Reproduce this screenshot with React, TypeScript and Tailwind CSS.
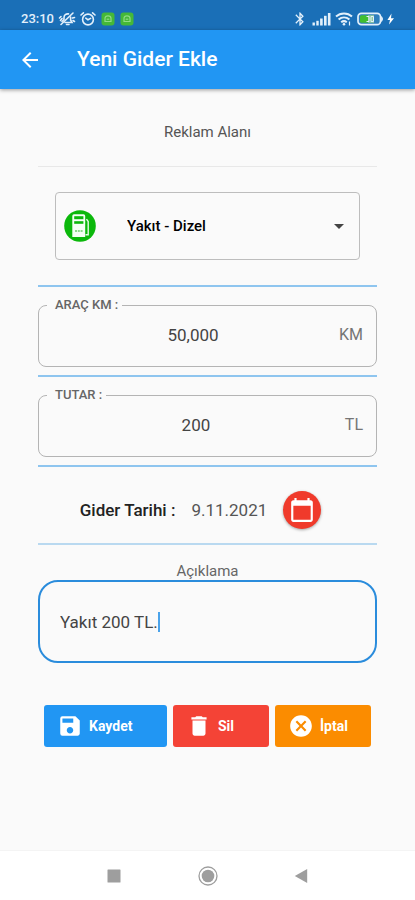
import { useState } from 'react';
import type { ReactNode } from 'react';
import {
  MdArrowBack,
  MdArrowDropDown,
  MdBluetooth,
  MdCalendarToday,
  MdCancel,
  MdDelete,
  MdSave,
} from 'react-icons/md';

function MutedBellIcon() {
  return (
    <svg width="18" height="16" viewBox="0 0 18 16" fill="none" stroke="currentColor" strokeWidth="1.6" strokeLinecap="round">
      <path d="M4 10.5 L6 8.5 V6.5 C6 4 8 2.6 10.5 2.9 M12.6 6 V9 L14 11.5 H7" />
      <path d="M8.5 13.5 H11 M3 13.5 L15 2 M1.5 7 L3 5.5 M2.5 9.5 L4 7.5 M14.5 7 L16.5 6.5 M15 9.5 L16.5 10.5" />
    </svg>
  );
}

function AlarmIcon() {
  return (
    <svg width="16" height="16" viewBox="0 0 16 16" fill="none" stroke="currentColor" strokeWidth="1.6" strokeLinecap="round">
      <circle cx="8" cy="8.5" r="5.4" />
      <path d="M8 8.8 L5.8 7.2 M8 8.8 L10.6 7.4 M1 4 L3.4 1.8 M15 4 L12.6 1.8" />
    </svg>
  );
}

function AppBadgeIcon() {
  return (
    <svg width="14" height="14" viewBox="0 0 14 14">
      <rect x="0.5" y="0.5" width="13" height="13" rx="3" fill="#45b838" />
      <path d="M4 9.5 V6.5 C4 4.8 5.2 3.8 7 3.8 S10 4.8 10 6.5 V9.5 Z" fill="none" stroke="#8fdc84" strokeWidth="1.2" />
      <path d="M5.7 7.2 H8.3" stroke="#8fdc84" strokeWidth="1.2" />
    </svg>
  );
}

function SignalIcon() {
  return (
    <svg width="19" height="14" viewBox="0 0 19 14" fill="currentColor">
      <rect x="0.5" y="10.5" width="2.4" height="3" />
      <rect x="4.3" y="8.8" width="2.4" height="4.7" />
      <rect x="8.1" y="6.5" width="2.6" height="7" />
      <rect x="12" y="3.8" width="2.6" height="9.7" />
      <rect x="15.9" y="1" width="2.6" height="12.5" />
    </svg>
  );
}

function WifiIcon() {
  return (
    <svg width="18" height="14" viewBox="0 0 18 14" fill="none" stroke="currentColor" strokeWidth="2">
      <path d="M1 4.6 C5.5 0.4 12.5 0.4 17 4.6 M3.6 7.6 C6.8 4.7 11.2 4.7 14.4 7.6 M6.2 10.3 C7.9 8.9 10.1 8.9 11.8 10.3" />
      <circle cx="9" cy="12.2" r="1.3" fill="currentColor" stroke="none" />
      <path d="M14.5 9.5 V13.5" strokeWidth="1.2" />
    </svg>
  );
}

function BatteryIcon() {
  return (
    <svg width="38" height="14" viewBox="0 0 38 14">
      <rect x="1" y="1.4" width="22.5" height="11.2" rx="3.4" fill="#2f7fbd" stroke="#e3f0fb" strokeWidth="1.7" />
      <path d="M3 4.8 Q3 3.2 4.6 3.2 H11 V10.8 H4.6 Q3 10.8 3 9.2 Z" fill="#3fbf2f" />
      <rect x="11" y="3.2" width="6" height="7.6" fill="#8fcb9c" />
      <path d="M9.5 4.5 H12 V9.5 H9.5 M14 9.5 V4.5 H16.5 V9.5 Z" fill="none" stroke="#e3f0fb" strokeWidth="1" />
      <path d="M24.6 4.6 Q26.4 7 24.6 9.4 Z" fill="#e3f0fb" stroke="#e3f0fb" />
      <path d="M34.5 1.6 L30.4 7.9 H33 L32 12.6 L37 6.3 H34 Z" fill="#fff" />
    </svg>
  );
}

function FuelIcon() {
  return (
    <svg width="32" height="32" viewBox="0 0 32 32" className="shrink-0">
      <circle cx="16" cy="16" r="15.8" fill="#0bb80b" />
      <path d="M8.3 27 V6 Q8.3 4.3 10 4.3 H19.5 Q21.2 4.3 21.2 6 V27 Z" fill="#f4fff4" />
      <rect x="10.2" y="6.2" width="9.2" height="3" fill="#0bb80b" />
      <rect x="10.2" y="11.2" width="9.2" height="2.6" fill="#0bb80b" />
      <path d="M11 21 H18.6" stroke="#8bd98b" strokeWidth="2" strokeDasharray="2 0.8" />
      <path d="M21.5 24.8 H24.2 V11.5 L22.5 9.2" fill="none" stroke="#e4fbe4" strokeWidth="1.4" />
    </svg>
  );
}

function StatusBar() {
  return (
    <div className="flex h-[30px] items-center justify-between bg-[#1a6fb7] pt-2 pr-5 pl-[21px] text-[#e3f0fb]">
      <div className="flex items-center gap-1">
        <span className="text-[13px] leading-4 font-medium">23:10</span>
        <MutedBellIcon />
        <div className="flex items-center gap-[5px]">
          <AlarmIcon />
          <AppBadgeIcon />
          <AppBadgeIcon />
        </div>
      </div>
      <div className="flex items-center gap-1">
        <MdBluetooth size={16} stroke="currentColor" />
        <SignalIcon />
        <WifiIcon />
        <BatteryIcon />
      </div>
    </div>
  );
}

interface AmountFieldProps {
  id: string;
  label: string;
  unit: string;
  value: string;
  onChange: (value: string) => void;
}

function AmountField({ id, label, unit, value, onChange }: AmountFieldProps) {
  return (
    <fieldset className="mt-[10px] mb-2 min-w-0 rounded-lg border border-[#b4b4b4]">
      <legend className="ml-2 pr-1 pl-2 text-[13px] leading-4 font-medium text-[#666]">
        <label htmlFor={id}>{label}</label>
      </legend>
      <div className="flex h-[53px] items-center pr-[13px] pb-[10px] pl-2">
        <input
          id={id}
          inputMode="numeric"
          value={value}
          onChange={(e) => onChange(e.target.value)}
          className="min-w-0 flex-1 bg-transparent text-center text-[17px] leading-6 text-[#444] outline-none"
        />
        <span className="text-base text-[#757575]">{unit}</span>
      </div>
    </fieldset>
  );
}

function Divider() {
  return <hr className="h-0.5 border-0 bg-[#8ec5ef]" />;
}

interface ActionButtonProps {
  icon: ReactNode;
  label: string;
  className: string;
}

function ActionButton({ icon, label, className }: ActionButtonProps) {
  return (
    <button
      type="button"
      className={`flex h-[42px] items-center gap-[6px] rounded-[3px] pl-[13px] text-sm font-bold text-white ${className}`}
    >
      {icon}
      {label}
    </button>
  );
}

export default function App() {
  const [km, setKm] = useState('50,000');
  const [total, setTotal] = useState('200');
  const [note, setNote] = useState('Yakıt 200 TL.');

  return (
    <div className="flex min-h-screen flex-col bg-[#fafafa] font-[Roboto,'Noto_Sans',sans-serif]">
      <StatusBar />

      {/* App bar */}
      <header className="flex h-[59px] items-center gap-[35px] bg-[#2196f3] pl-[18px] text-white shadow-[0_1px_4px_rgba(0,0,0,0.4)]">
        <button type="button" aria-label="Geri">
          <MdArrowBack size={24} />
        </button>
        <h1 className="text-[21px] font-medium">Yeni Gider Ekle</h1>
      </header>

      <main className="flex-1 px-[38px]">
        {/* Ad slot */}
        <p className="border-b border-[#e8e8e8] pt-[33px] pb-6 text-center text-[15px] leading-5 text-[#555]">
          Reklam Alanı
        </p>

        {/* Expense type */}
        <div className="mx-[17px] my-[25px] flex h-[68px] items-center rounded border border-[#bdbdbd] px-2">
          <FuelIcon />
          <select
            aria-label="Gider türü"
            className="ml-[31px] min-w-0 flex-1 appearance-none bg-transparent text-[15px] leading-5 font-medium text-black outline-none"
          >
            <option>Yakıt - Dizel</option>
          </select>
          <MdArrowDropDown size={24} className="pointer-events-none shrink-0 text-[#444]" />
        </div>

        <Divider />
        <AmountField id="km" label="ARAÇ KM :" unit="KM" value={km} onChange={setKm} />
        <Divider />
        <AmountField id="total" label="TUTAR :" unit="TL" value={total} onChange={setTotal} />
        <Divider />

        {/* Date */}
        <div className="flex items-center justify-center gap-4 pt-6 pr-[14px] pb-[14px] text-[17px] leading-6">
          <span className="font-medium text-[#222]">Gider Tarihi :</span>
          <span className="text-[#555]">9.11.2021</span>
          <button
            type="button"
            aria-label="Tarih seç"
            className="flex size-[38px] items-center justify-center rounded-full bg-[#f03a2b] text-white shadow-[0_1px_3px_rgba(0,0,0,0.35)]"
          >
            <MdCalendarToday size={26} />
          </button>
        </div>
        <hr className="h-0.5 border-0 bg-[#b9d9f0]" />

        {/* Note */}
        <label htmlFor="note" className="mt-[17px] block text-center text-[15px] leading-[18px] text-[#666]">
          Açıklama
        </label>
        <div className="flex h-[83px] items-center rounded-[20px] border-2 border-[#2a8cdc] px-5">
          <input
            id="note"
            value={note}
            onChange={(e) => setNote(e.target.value)}
            className="field-sizing-content max-w-full bg-transparent text-[17px] leading-6 text-[#444] caret-transparent outline-none"
          />
          <span className="h-5 w-0.5 bg-[#4ba3ea]" />
        </div>

        {/* Actions */}
        <div className="mt-[42px] grid grid-cols-[123fr_96fr_96fr] gap-[6px] px-[6px]">
          <ActionButton icon={<MdSave size={26} />} label="Kaydet" className="bg-[#2196f3]" />
          <ActionButton icon={<MdDelete size={26} />} label="Sil" className="bg-[#f44336]" />
          <ActionButton icon={<MdCancel size={26} />} label="İptal" className="bg-[#fb8c00]" />
        </div>
      </main>

      {/* System navigation */}
      <nav className="flex h-[50px] items-center justify-center gap-[74px] border-t border-[#f4f4f4] bg-white text-[#9e9e9e]">
        <button type="button" aria-label="Son uygulamalar">
          <svg width="20" height="20" viewBox="0 0 20 20" fill="currentColor">
            <rect x="3.5" y="3.5" width="13" height="13" rx="0.5" />
          </svg>
        </button>
        <button type="button" aria-label="Ana ekran">
          <svg width="20" height="20" viewBox="0 0 20 20" fill="currentColor">
            <circle cx="10" cy="10" r="9" fill="none" stroke="currentColor" strokeWidth="1.3" />
            <circle cx="10" cy="10" r="6.3" />
          </svg>
        </button>
        <button type="button" aria-label="Sistem geri">
          <svg width="20" height="20" viewBox="0 0 20 20" fill="currentColor">
            <path d="M15.2 3 V17 L2.8 10 Z" />
          </svg>
        </button>
      </nav>
    </div>
  );
}
